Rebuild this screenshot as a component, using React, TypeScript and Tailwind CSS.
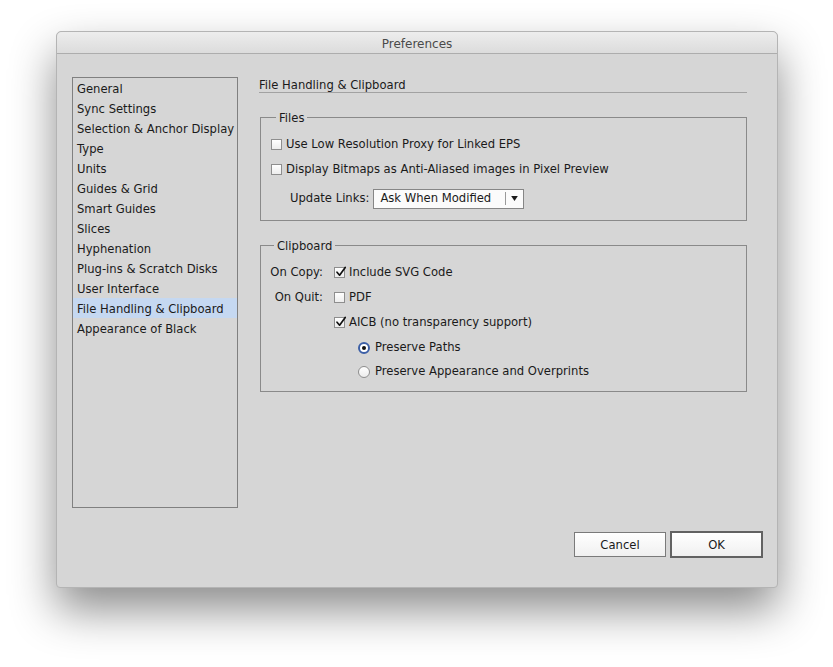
import type { ReactNode } from 'react';

const categories = [
  'General',
  'Sync Settings',
  'Selection & Anchor Display',
  'Type',
  'Units',
  'Guides & Grid',
  'Smart Guides',
  'Slices',
  'Hyphenation',
  'Plug-ins & Scratch Disks',
  'User Interface',
  'File Handling & Clipboard',
  'Appearance of Black',
];

function Checkbox({ checked = false }: { checked?: boolean }) {
  return (
    <span className="relative flex h-[11px] w-[11px] shrink-0 items-center justify-center border border-[#8e8e8e] bg-gradient-to-b from-white to-[#ededed]">
      {checked && (
        <svg viewBox="0 0 12 12" className="absolute -top-[2px] left-[0px] h-[12px] w-[12px]">
          <path d="M2 6.2 L4.6 9.2 L10.2 1.4" fill="none" stroke="#111" strokeWidth="1.7" strokeLinecap="round" strokeLinejoin="round" />
        </svg>
      )}
    </span>
  );
}

function Radio({ checked = false }: { checked?: boolean }) {
  return checked ? (
    <span className="flex h-[12px] w-[12px] shrink-0 items-center justify-center rounded-full border-2 border-[#3c5fa6] bg-white">
      <span className="h-[4px] w-[4px] rounded-full bg-[#111]" />
    </span>
  ) : (
    <span className="h-[12px] w-[12px] shrink-0 rounded-full border border-[#8e8e8e] bg-gradient-to-b from-white to-[#ececec]" />
  );
}

function Group({ title, children, className = '' }: { title: string; children: ReactNode; className?: string }) {
  return (
    <fieldset className={`ml-px w-[487px] border border-[#8a8a8a] ${className}`}>
      <legend className="ml-[5px] px-[3px] pt-[3px] leading-[13px]">{title}</legend>
      {children}
    </fieldset>
  );
}

export default function App() {
  return (
    <div className="min-h-screen bg-white pl-[56px] pt-[31px] font-['DejaVu_Sans',sans-serif] text-[11.6px] text-[#1a1a1a]">
      <div className="flex h-[557px] w-[722px] flex-col rounded-b-[4px] rounded-t-[5px] border border-[#b4b4b4] bg-[#d6d6d6] shadow-[0_22px_45px_rgba(0,0,0,0.45)]">
        <div className="flex h-[22px] shrink-0 items-center justify-center rounded-t-[5px] border-b border-[#adadad] bg-gradient-to-b from-[#ededed] to-[#dcdcdc] pt-[2px] text-[12px] text-[#4a4a4a]">
          Preferences
        </div>

        <div className="flex flex-1 flex-col pl-[15px] pr-[14px] pt-[23px]">
          <div className="flex">
            <ul className="h-[431px] w-[166px] border border-[#808080]">
              {categories.map((c) => (
                <li
                  key={c}
                  className={`flex h-[20px] items-center pl-[4px] pt-[3px] ${c === 'File Handling & Clipboard' ? 'bg-[#c5d8f1]' : ''}`}
                >
                  {c}
                </li>
              ))}
            </ul>

            <div className="ml-[21px] w-[488px]">
              <div className="border-b border-[#a2a2a2] pt-px leading-[14px]">File Handling &amp; Clipboard</div>

              <Group title="Files" className="mt-[16px] pb-[8px] pl-[10px] pt-[7px]">
                <div className="flex h-[25px] items-center gap-[4px]">
                  <Checkbox />
                  <span>Use Low Resolution Proxy for Linked EPS</span>
                </div>
                <div className="flex h-[25px] items-center gap-[4px]">
                  <Checkbox />
                  <span>Display Bitmaps as Anti-Aliased images in Pixel Preview</span>
                </div>
                <div className="flex h-[30px] items-center pl-[19px] pt-[3px]">
                  <span className="mr-[4px]">Update Links:</span>
                  <div className="flex h-[20px] w-[151px] items-center border border-[#868686] bg-[#fbfbfb]">
                    <span className="flex-1 pl-[6px] pt-px">Ask When Modified</span>
                    <span className="h-[13px] w-px bg-[#9a9a9a]" />
                    <span className="flex w-[17px] justify-center">
                      <svg viewBox="0 0 8 6" className="h-[5px] w-[7px]">
                        <path d="M0 0 H8 L4 6 Z" fill="#1a1a1a" />
                      </svg>
                    </span>
                  </div>
                </div>
              </Group>

              <Group title="Clipboard" className="mt-[16px] pb-[7px] pl-[8px] pt-[7px]">
                <div className="grid grid-cols-[54px_1fr] items-center">
                  <span className="pt-px text-right">On Copy:</span>
                  <div className="flex h-[25px] items-center gap-[4px] pl-[11px]">
                    <Checkbox checked />
                    <span>Include SVG Code</span>
                  </div>
                  <span className="pt-px text-right">On Quit:</span>
                  <div className="flex h-[25px] items-center gap-[4px] pl-[11px]">
                    <Checkbox />
                    <span>PDF</span>
                  </div>
                  <span />
                  <div className="flex h-[25px] items-center gap-[4px] pl-[11px]">
                    <Checkbox checked />
                    <span>AICB (no transparency support)</span>
                  </div>
                  <span />
                  <div className="flex h-[25px] items-center gap-[5px] pl-[35px]">
                    <Radio checked />
                    <span>Preserve Paths</span>
                  </div>
                  <span />
                  <div className="flex h-[24px] items-center gap-[5px] pl-[35px]">
                    <Radio />
                    <span>Preserve Appearance and Overprints</span>
                  </div>
                </div>
              </Group>
            </div>
          </div>

          <div className="mt-[23px] flex items-center justify-end gap-[4px]">
            <button className="h-[25px] w-[92px] border border-[#7a7a7a] bg-gradient-to-b from-white to-[#f0f0f0] pt-[3px] text-[11.6px]">
              Cancel
            </button>
            <button className="h-[27px] w-[93px] border-2 border-[#626262] bg-gradient-to-b from-white to-[#f0f0f0] pt-[3px] text-[11.6px]">
              OK
            </button>
          </div>
        </div>
      </div>
    </div>
  );
}
